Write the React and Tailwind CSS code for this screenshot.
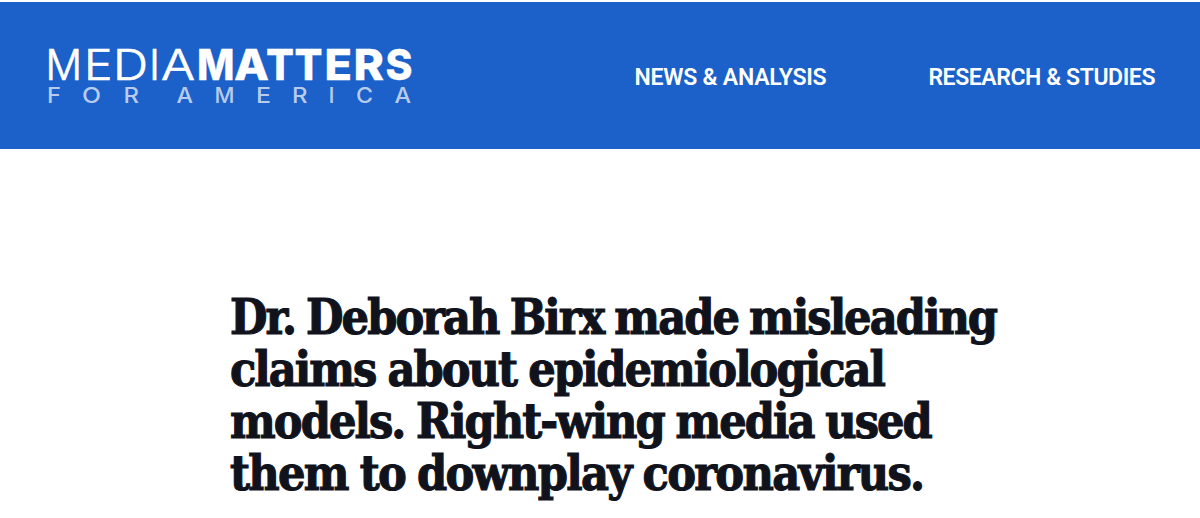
import React from 'react';

const NAV = [
  { label: 'NEWS & ANALYSIS', tracking: 'tracking-[-0.22px]' },
  { label: 'RESEARCH & STUDIES', tracking: 'tracking-[-0.42px]' },
];

const HEADLINE = [
  { text: 'Dr. Deborah Birx made misleading', spacing: 'tracking-[-1.94px] [word-spacing:-2px]' },
  { text: 'claims about epidemiological', spacing: 'tracking-[-1.95px] [word-spacing:-1px]' },
  { text: 'models. Right-wing media used', spacing: 'tracking-[-1.92px] [word-spacing:-1.5px]' },
  { text: 'them to downplay coronavirus.', spacing: 'tracking-[-1.68px] [word-spacing:-1.5px]' },
];

// letter, left edge, advance width
const MEDIA = [['M', -2.5, 36.5], ['E', 36, 28.5], ['D', 65, 35], ['I', 101, 11], ['A', 113, 34]];
const MATTERS = [['M', 149, 37.5], ['A', 186, 35], ['T', 218, 28], ['T', 246.5, 28], ['E', 276.5, 27.5], ['R', 305.5, 30.5], ['S', 337.5, 27]];
const AMERICA = [['F', -1, 14], ['O', 34, 19], ['R', 75.5, 15.5], ['A', 128.5, 16.5], ['M', 166.5, 20], ['E', 208, 15], ['R', 244, 15.5], ['I', 280.5, 6], ['C', 308, 17], ['A', 346.5, 16.5]];

function Letters({ letters, y, ...props }) {
  return (
    <g {...props}>
      {letters.map(([letter, x, width]) => (
        <text key={x} x={x} y={y} textLength={width} lengthAdjust="spacingAndGlyphs">{letter}</text>
      ))}
    </g>
  );
}

function Logo() {
  return (
    <svg className="block overflow-visible font-['Inter',sans-serif]" width="370" height="66" viewBox="0 0 370 66" fill="#fff">
      <Letters letters={MEDIA} y={39.4} fontSize="42" fontWeight="300" stroke="#fff" strokeWidth="0.7" />
      <Letters letters={MATTERS} y={39.4} fontSize="42.5" fontWeight="800" stroke="#fff" strokeWidth="0.3" />
      <Letters letters={AMERICA} y={61.6} fontSize="21" fontWeight="500" fill="#b9cbea" />
    </svg>
  );
}

export default function App() {
  return (
    <div className="h-[518px] overflow-hidden bg-white pt-[2px]">
      <header className="flex h-[147px] justify-between bg-[#1b61c9] pl-12 pr-[45px] pt-[39px]">
        <Logo />
        <nav className="flex gap-[102px] pt-[21px] font-['Roboto',sans-serif] text-[23px] leading-8 font-semibold text-white">
          {NAV.map(({ label, tracking }) => (
            <a key={label} className={`whitespace-nowrap ${tracking}`}>{label}</a>
          ))}
        </nav>
      </header>
      <h1 className="ml-[230px] mt-[142px] font-['DejaVu_Serif_Condensed','DejaVu_Serif',serif] text-[48px] leading-[52px] font-bold text-[#11131c] [font-stretch:condensed] [-webkit-text-stroke:1.1px_#11131c]">
        {HEADLINE.map(({ text, spacing }) => (
          <span key={text} className={`block whitespace-nowrap ${spacing}`}>{text}</span>
        ))}
      </h1>
    </div>
  );
}
